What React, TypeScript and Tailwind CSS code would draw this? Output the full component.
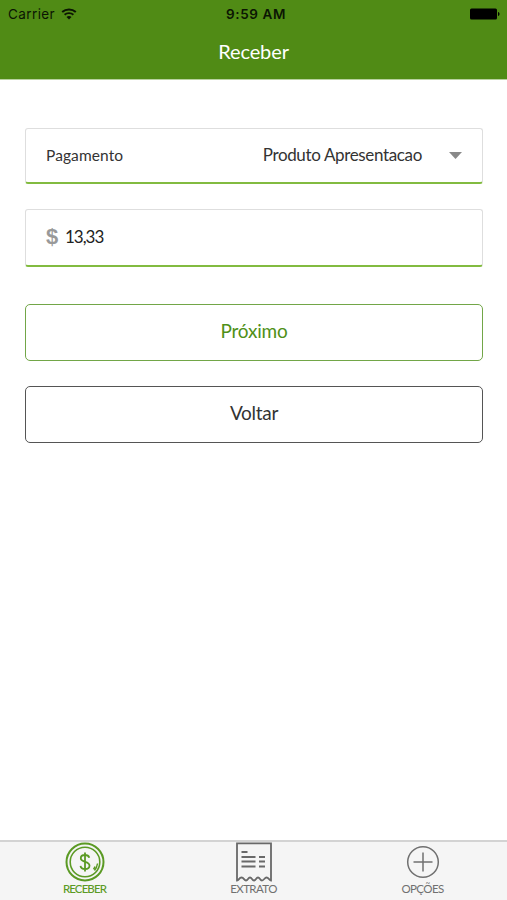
import React, { useState } from "react";

const WifiIcon = () => (
  <svg width="16" height="12" viewBox="0 0 16 12" fill="none" stroke="#0b1503">
    <path d="M1.2 4.1C5 .6 11 .6 14.8 4.1" strokeWidth="2" />
    <path d="M3.6 6.8c2.5-2.3 6.3-2.3 8.8 0" strokeWidth="1.9" />
    <path d="M8 11.5L5.5 8.9c1.4-1.3 3.6-1.3 5 0z" fill="#0b1503" stroke="none" />
  </svg>
);

const BatteryIcon = () => (
  <svg width="30" height="12" viewBox="0 0 30 12" fill="#000">
    <rect x="0" y="0.5" width="27" height="11" rx="1.5" />
    <path d="M28 4c2 .5 2 3.5 0 4z" />
  </svg>
);

const CoinIcon = () => (
  <svg width="40" height="40" viewBox="0 0 40 40" fill="none" stroke="#5b9a24">
    <circle cx="20" cy="20" r="18.5" strokeWidth="2" />
    <circle cx="20" cy="20" r="14.8" strokeWidth="1.6" />
    <path
      d="M24.3 15.7c-.6-1.8-2.1-2.7-4.3-2.7-2.4 0-4.2 1.2-4.2 3.3 0 4.6 8.7 2.5 8.7 7.3 0 2.2-1.9 3.5-4.4 3.5-2.6 0-4.3-1.2-4.6-3.2M20 10.5v19"
      strokeWidth="1.8"
    />
    <path d="M32.5 21.5c-.4 3-1.300 5-3 7M30 24.500c-.4 1.200-.8 1.900-1.500 2.800" strokeWidth="1.4" />
  </svg>
);

const ReceiptIcon = () => (
  <svg width="38" height="40" viewBox="0 0 38 40" fill="none" stroke="#696969" strokeWidth="1.8">
    <path d="M2 38.5V1.3h34v37.2c-1.5 0-2.5-3-4.5-3s-2.5 3-4.5 3-2-3-4-3-2 3-4 3-2-3-4-3-2 3-4 3-2-3-4.5-3-2.5 3-4.5 3z" />
    <path d="M6.5 10h6M6.5 15h14M6.5 19.5h14M6.5 24.5h14M24 15h6M24 19.5h6M24 24.5h6" />
  </svg>
);

const PlusIcon = () => (
  <svg width="34" height="34" viewBox="0 0 34 34" fill="none" stroke="#707070" strokeWidth="1.5">
    <circle cx="17" cy="17" r="15.3" />
    <path d="M17 7.5v19M7.5 17h19" />
  </svg>
);

const tabs = [
  { label: "RECEBER", icon: <CoinIcon />, style: "text-[#5b9a24] tracking-[-0.9px] font-medium" },
  { label: "EXTRATO", icon: <ReceiptIcon />, style: "text-[#707070] tracking-[-0.6px]" },
  { label: "OPÇÕES", icon: <PlusIcon />, style: "text-[#707070] tracking-[-0.6px]" }
];

const App = () => {
  const [amount, setAmount] = useState("13,33");
  const onChangeAmount = (e: React.ChangeEvent<HTMLInputElement>) => {
    setAmount(e.target.value);
  };

  return (
    <div className="flex flex-col h-screen bg-white font-['Lato',sans-serif] text-[#333]">
      <header className="h-[80px] shrink-0 bg-[#508b15] border-b border-[#b8d19f]">
        <div className="grid grid-cols-3 items-center h-[27px] pl-2 pr-[7px] font-['Inter',sans-serif] text-[#0b1503]">
          <div className="flex items-center gap-1.5 text-[13.5px] leading-4 tracking-[0.4px]">
            Carrier
            <WifiIcon />
          </div>
          <div className="pl-1 text-center text-[13.5px] leading-4 font-semibold tracking-[0.6px] whitespace-nowrap">
            9:59 AM
          </div>
          <div className="flex justify-end">
            <BatteryIcon />
          </div>
        </div>
        <h1 className="text-center text-white text-xl leading-[48px] tracking-[-0.1px]">Receber</h1>
      </header>

      <main className="flex flex-col grow pl-[25px] pr-6 pt-12">
        <div className="flex items-center h-14 pl-5 pr-5 border border-[#dedede] border-b-2 border-b-[#82bb40] rounded-[3px]">
          <span className="text-[15.5px] tracking-[0.1px]">Pagamento</span>
          <span className="ml-auto mb-0.5 text-[17px] tracking-[-0.35px]">Produto Apresentacao</span>
          <svg className="ml-[27px]" width="13" height="7" viewBox="0 0 13 7" fill="#898989">
            <path d="M0 0h13L6.5 7z" />
          </svg>
        </div>

        <label className="flex items-center h-[58px] mt-[25px] pl-5 border border-[#dedede] border-b-2 border-b-[#82bb40] rounded-[3px]">
          <span className="w-5 mb-[3px] font-['Liberation_Sans',sans-serif] font-bold text-[22px] text-[#999]">$</span>
          <input
            type="text"
            className="w-40 -ml-px mb-0.5 text-[17px] text-[#222] tracking-[-1px] focus:outline-none"
            value={amount}
            onChange={onChangeAmount}
          />
        </label>

        <button className="h-[57px] mt-[37px] pb-[3px] border border-[#72a648] rounded-[5px] text-[#4f9018] text-[19px] tracking-[-0.2px]">
          Próximo
        </button>
        <button className="h-[57px] mt-[25px] pb-[3px] border border-[#555] rounded-[5px] text-[19px] tracking-[-0.3px]">
          Voltar
        </button>
      </main>

      <nav className="grid grid-cols-3 h-[60px] shrink-0 bg-[#f5f5f5] border-t-2 border-[#d3d3d3]">
        {tabs.map((tab) => (
          <button key={tab.label} className="flex flex-col items-center">
            <span className="flex items-center h-10 shrink-0">{tab.icon}</span>
            <span className={`text-[11.5px] leading-[13px] ${tab.style}`}>{tab.label}</span>
          </button>
        ))}
      </nav>
    </div>
  );
};

export default App;
